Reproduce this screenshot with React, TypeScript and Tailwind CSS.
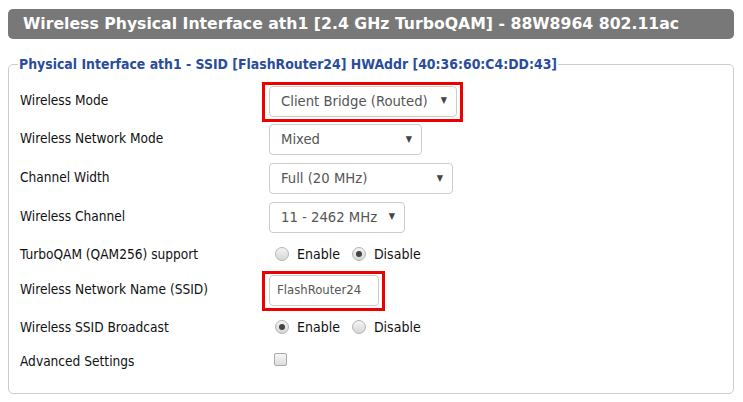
import type { ReactNode } from "react";

const labelFont = { fontFamily: '"DejaVu Sans Condensed", "DejaVu Sans", sans-serif' };

function RedMark({ children }: { children: ReactNode }) {
    return (
        <div className="relative inline-flex">
            {children}
            <div className="pointer-events-none absolute -left-[7px] -right-[6px] -top-[4px] -bottom-[5px] border-[3px] border-[#ee0000]" />
        </div>
    );
}

function Select({ value, width }: { value: string; width: string }) {
    return (
        <div className={`flex h-[31px] items-center justify-between rounded-[4px] border border-[#cccccc] bg-white pl-[11px] pr-[9px] text-[14.7px] text-[#555555] ${width}`}>
            <span>{value}</span>
            <span className="text-[9px] text-[#444444]">▼</span>
        </div>
    );
}

function Radio({ checked }: { checked?: boolean }) {
    return (
        <span className="flex h-[14px] w-[14px] items-center justify-center rounded-full border border-[#b5b5b5] bg-gradient-to-b from-[#f4f4f4] to-[#d6d6d6]">
            {checked && <span className="h-[6px] w-[6px] rounded-full bg-[#444444]" />}
        </span>
    );
}

function RadioPair({ enabled }: { enabled: boolean }) {
    return (
        <div className="flex items-center pl-[6px] text-[14px] text-[#111111]">
            <Radio checked={enabled} />
            <span className="ml-[8px] mr-[12px] pt-[2px]">Enable</span>
            <Radio checked={!enabled} />
            <span className="ml-[8px] pt-[2px]">Disable</span>
        </div>
    );
}

function Row({ label, height, low, children }: { label: string; height: string; low?: boolean; children: ReactNode }) {
    return (
        <div className={`flex items-center ${height}`}>
            <div className={`w-[249px] text-[13.6px] text-[#111111] ${low ? "pt-[2px]" : "pb-[2px]"}`}>{label}</div>
            <div className="flex items-center">{children}</div>
        </div>
    );
}

export default function App() {
    return (
        <div className="h-[402px] w-[743px] bg-white px-[8px] pt-[9px]" style={labelFont}>
            {/* TITLE BAR */}
            <div className="flex h-[30px] w-[726px] items-center rounded-[5px] bg-[#787878] pl-[15px] text-[15.7px] font-bold text-white"
                style={{ fontFamily: '"DejaVu Sans", sans-serif' }}>
                Wireless Physical Interface ath1 [2.4 GHz TurboQAM] - 88W8964 802.11ac
            </div>

            {/* FIELDSET */}
            <fieldset className="mt-[16px] h-[339px] w-[726px] rounded-[5px] border border-[#cccccc] pl-[11px] pr-0">
                <legend className="ml-[-2px] px-[1px] text-[13.9px] font-bold leading-[18px] text-[#2a4d9b]">
                    Physical Interface ath1 - SSID [FlashRouter24] HWAddr [40:36:60:C4:DD:43]
                </legend>

                <div className="flex flex-col pt-[9px]">
                    <Row label="Wireless Mode" height="h-[38px]">
                        <RedMark>
                            <Select value="Client Bridge (Routed)" width="w-[188px]" />
                        </RedMark>
                    </Row>
                    <Row label="Wireless Network Mode" height="h-[39px]">
                        <Select value="Mixed" width="w-[153px]" />
                    </Row>
                    <Row label="Channel Width" height="h-[39px]">
                        <Select value="Full (20 MHz)" width="w-[184px]" />
                    </Row>
                    <Row label="Wireless Channel" height="h-[38px]">
                        <Select value="11 - 2462 MHz" width="w-[136px]" />
                    </Row>
                    <Row label="TurboQAM (QAM256) support" height="h-[35px]" low>
                        <RadioPair enabled={false} />
                    </Row>
                    <Row label="Wireless Network Name (SSID)" height="h-[38px]">
                        <RedMark>
                            <div className="flex h-[31px] w-[110px] items-center rounded-[4px] border border-[#cccccc] bg-white pl-[7px] text-[13px] text-[#555555]">
                                FlashRouter24
                            </div>
                        </RedMark>
                    </Row>
                    <Row label="Wireless SSID Broadcast" height="h-[35px]" low>
                        <RadioPair enabled={true} />
                    </Row>
                    <Row label="Advanced Settings" height="h-[33px]" low>
                        <span className="ml-[5px] -mt-[2px] h-[13px] w-[13px] rounded-[2px] border border-[#a9a9a9] bg-gradient-to-b from-[#f7f7f7] to-[#dcdcdc]" />
                    </Row>
                </div>
            </fieldset>
        </div>
    );
}
